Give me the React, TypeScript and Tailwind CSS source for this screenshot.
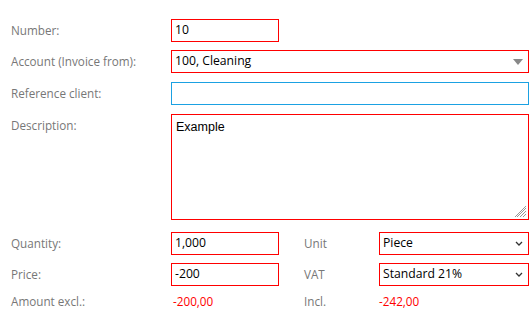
import React from "react";

const label = "w-[160px] shrink-0 text-[11.7px] text-[#777]";
const box = "h-[23px] border border-[#ff0000] bg-white flex items-center px-[3px] text-[12.2px] text-black";

function Chevron() {
  return (
    <svg width="8" height="5" viewBox="0 0 8 5" className="ml-auto mr-[2px]">
      <path d="M1 1 L4 4 L7 1" stroke="#333" strokeWidth="1.3" fill="none" />
    </svg>
  );
}

export default function App() {
  return (
    <main
      className="w-[531px] h-[318px] bg-white pl-[11px] pr-[2px] pt-[19px] flex flex-col"
      style={{ fontFamily: '"Open Sans", sans-serif' }}
    >
      <div className="flex items-center h-[23px]">
        <span className={label}>Number:</span>
        <div className={`${box} w-[108px]`}>10</div>
      </div>

      <div className="flex items-center h-[23px] mt-[8px]">
        <span className={label}>Account (Invoice from):</span>
        <div className={`${box} flex-1`}>
          <span>100, Cleaning</span>
          <svg width="10" height="6" viewBox="0 0 10 6" className="ml-auto mr-[2px]">
            <path d="M0 0 H10 L5 6 Z" fill="#888" />
          </svg>
        </div>
      </div>

      <div className="flex items-center h-[23px] mt-[9px]">
        <span className={label}>Reference client:</span>
        <div className="h-[23px] flex-1 border border-[#1ba1e2] bg-white" />
      </div>

      <div className="flex items-start h-[106px] mt-[9px]">
        <span className={`${label} pt-[3px]`}>Description:</span>
        <div className="relative h-full flex-1 border border-[#ff0000] bg-white px-[4px] pt-[3px] text-[12.5px] text-[#000]" style={{ fontFamily: '"Liberation Sans", Arial, sans-serif' }}>
          Example
          <svg width="12" height="12" viewBox="0 0 12 12" className="absolute right-[1px] bottom-[1px]">
            <path d="M11 2 L2 11 M11 5 L5 11 M11 8 L8 11 M11 0 L0 11" stroke="#999" strokeWidth="1" />
          </svg>
        </div>
      </div>

      <div className="flex items-center h-[23px] mt-[12px]">
        <span className={label}>Quantity:</span>
        <div className={`${box} w-[108px]`}>1,000</div>
        <span className="w-[75px] ml-[25px] text-[11.7px] text-[#777]">Unit</span>
        <div className={`${box} w-[150px]`}>
          <span>Piece</span>
          <Chevron />
        </div>
      </div>

      <div className="flex items-center h-[23px] mt-[8px]">
        <span className={label}>Price:</span>
        <div className={`${box} w-[108px]`}>-200</div>
        <span className="w-[75px] ml-[25px] text-[11.7px] text-[#777]">VAT</span>
        <div className={`${box} w-[150px]`}>
          <span>Standard 21%</span>
          <Chevron />
        </div>
      </div>

      <div className="flex items-center h-[23px] mt-[4px]">
        <span className={label}>Amount excl.:</span>
        <span className="w-[108px] pl-[2px] text-[11.7px] text-[#ff0000]">-200,00</span>
        <span className="w-[75px] ml-[25px] text-[11.7px] text-[#777]">Incl.</span>
        <span className="text-[11.7px] text-[#ff0000]">-242,00</span>
      </div>
    </main>
  );
}
